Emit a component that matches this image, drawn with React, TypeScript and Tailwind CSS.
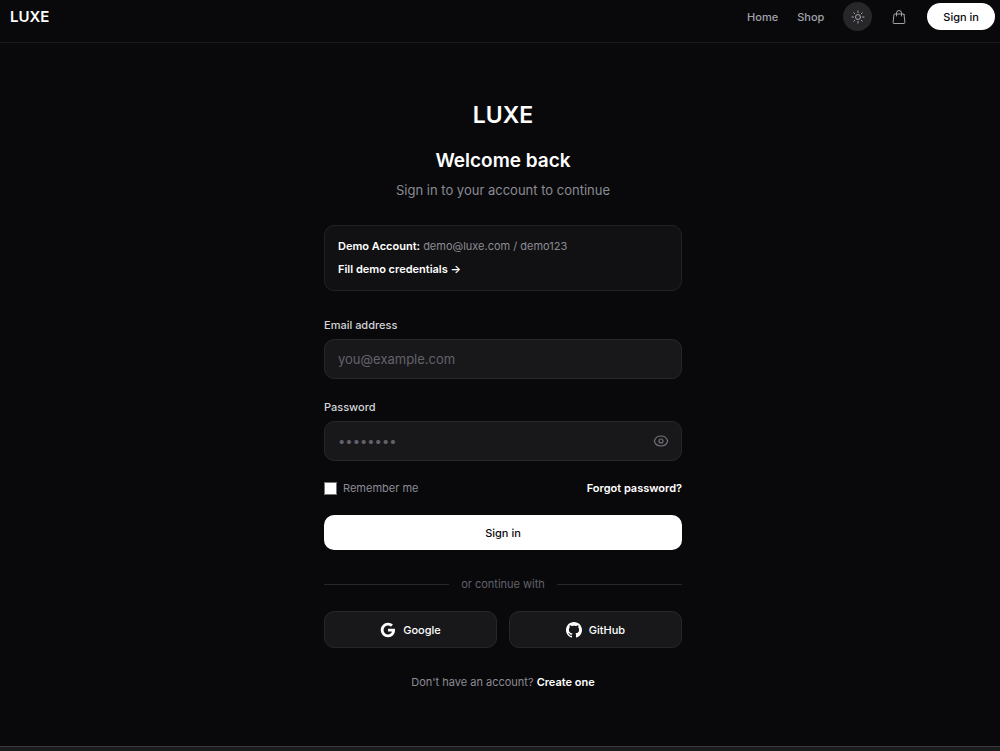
import { useState } from 'react';
import type { FormEvent, ReactNode } from 'react';

const DEMO = { email: 'demo@luxe.com', password: 'demo123' };

const inputClass =
    'h-10 w-full rounded-[10px] border border-[#27272a] bg-[#18181a] px-[13px] text-[13px] leading-5 text-white placeholder:text-[#62626b] focus:ring-1 focus:ring-zinc-500 focus:outline-none';

function SunIcon() {
    return (
        <svg viewBox="0 0 24 24" fill="none" stroke="currentColor" strokeWidth="1.5" strokeLinecap="round" strokeLinejoin="round" className="h-4 w-4">
            <path d="M12 3v2.25m6.364.386-1.591 1.591M21 12h-2.25m-.386 6.364-1.591-1.591M12 18.75V21m-4.773-4.227-1.591 1.591M5.25 12H3m4.227-4.773L5.636 5.636M15.75 12a3.75 3.75 0 1 1-7.5 0 3.75 3.75 0 0 1 7.5 0Z" />
        </svg>
    );
}

function BagIcon() {
    return (
        <svg viewBox="0 0 24 24" fill="none" stroke="currentColor" strokeWidth="1.5" strokeLinecap="round" strokeLinejoin="round" className="h-4 w-4">
            <path d="M15.75 10.5V6a3.75 3.75 0 1 0-7.5 0v4.5m11.356-1.993 1.263 12c.07.665-.45 1.243-1.119 1.243H4.25a1.125 1.125 0 0 1-1.12-1.243l1.264-12A1.125 1.125 0 0 1 5.513 7.5h12.974c.576 0 1.059.435 1.119 1.007Z" />
        </svg>
    );
}

function EyeIcon() {
    return (
        <svg viewBox="0 0 24 24" fill="none" stroke="currentColor" strokeWidth="1.75" strokeLinecap="round" strokeLinejoin="round" className="h-4 w-4">
            <path d="M2.036 12.322a1.012 1.012 0 0 1 0-.639C3.423 7.51 7.36 4.5 12 4.5c4.638 0 8.573 3.007 9.963 7.178.07.207.07.431 0 .639C20.577 16.49 16.64 19.5 12 19.5c-4.638 0-8.573-3.007-9.963-7.178Z" />
            <path d="M15 12a3 3 0 1 1-6 0 3 3 0 0 1 6 0Z" />
        </svg>
    );
}

function GoogleIcon() {
    return (
        <svg viewBox="1.5 1 22 22" fill="currentColor" className="h-4 w-4">
            <path d="M12.545 10.239v3.821h5.445c-.712 2.315-2.647 3.972-5.445 3.972a6.033 6.033 0 1 1 0-12.064c1.498 0 2.866.549 3.921 1.453l2.814-2.814A9.969 9.969 0 0 0 12.545 2C7.021 2 2.543 6.477 2.543 12s4.478 10 10.002 10c8.396 0 10.249-7.85 9.426-11.748l-9.426-.013Z" />
        </svg>
    );
}

function GitHubIcon() {
    return (
        <svg viewBox="0 0 24 24" fill="currentColor" className="h-4 w-4">
            <path d="M12 0c-6.626 0-12 5.373-12 12 0 5.302 3.438 9.8 8.207 11.387.599.111.793-.261.793-.577v-2.234c-3.338.726-4.033-1.416-4.033-1.416-.546-1.387-1.333-1.756-1.333-1.756-1.089-.745.083-.729.083-.729 1.205.084 1.839 1.237 1.839 1.237 1.07 1.834 2.807 1.304 3.492.997.107-.775.418-1.305.762-1.604-2.665-.305-5.467-1.334-5.467-5.931 0-1.311.469-2.381 1.236-3.221-.124-.303-.535-1.524.117-3.176 0 0 1.008-.322 3.301 1.23.957-.266 1.983-.399 3.003-.404 1.02.005 2.047.138 3.006.404 2.291-1.552 3.297-1.23 3.297-1.23.653 1.653.242 2.874.118 3.176.77.84 1.235 1.911 1.235 3.221 0 4.609-2.807 5.624-5.479 5.921.43.372.823 1.102.823 2.222v3.293c0 .319.192.694.801.576 4.765-1.589 8.199-6.086 8.199-11.386 0-6.627-5.373-12-12-12Z" />
        </svg>
    );
}

function SocialButton({ icon, children }: { icon: ReactNode; children: ReactNode }) {
    return (
        <button
            type="button"
            className="flex h-[37px] cursor-pointer items-center justify-center gap-[7px] rounded-[10px] border border-[#27272a] bg-[#18181a] font-medium text-white transition-colors hover:bg-[#222225]"
        >
            {icon}
            {children}
        </button>
    );
}

function Header() {
    return (
        <header className="border-b border-[#1c1c1f] pt-[2px] pr-[5px] pb-[11px] pl-[10px]">
            <div className="flex items-center justify-between">
                <a href="#" className="text-[15px] font-semibold text-white">
                    LUXE
                </a>
                <nav className="flex items-center font-medium text-[#a1a1aa]">
                    <a href="#" className="hover:text-white">Home</a>
                    <a href="#" className="ml-[19px] hover:text-white">Shop</a>
                    <button type="button" aria-label="Toggle theme" className="ml-[19px] flex h-[29px] w-[29px] cursor-pointer items-center justify-center rounded-full bg-[#27272a]">
                        <SunIcon />
                    </button>
                    <button type="button" aria-label="Cart" className="ml-[19px] flex h-4 w-4 cursor-pointer items-center justify-center">
                        <BagIcon />
                    </button>
                    <a href="#" className="ml-5 flex h-[27px] items-center rounded-full bg-white px-4 text-[#09090b]">
                        Sign in
                    </a>
                </nav>
            </div>
        </header>
    );
}

export default function App() {
    const [email, setEmail] = useState('');
    const [password, setPassword] = useState('');
    const [showPassword, setShowPassword] = useState(false);

    const fillDemo = () => {
        setEmail(DEMO.email);
        setPassword(DEMO.password);
    };

    const handleSubmit = (e: FormEvent) => e.preventDefault();

    return (
        <div className="flex min-h-screen flex-col bg-[#09090b] font-['Inter',sans-serif] text-[11px] leading-4 text-[#a1a1aa]">
            <Header />

            <main className="flex flex-1 items-start justify-center pt-14 pb-14 pl-[6px]">
                <div className="w-full max-w-[358px]">
                    <div className="text-center">
                        <a href="#" className="block text-[23px] leading-8 font-semibold text-white">LUXE</a>
                        <h1 className="mt-4 text-[19px] leading-7 font-semibold text-white">Welcome back</h1>
                        <p className="mt-[5px] text-[13px] leading-5 text-[#8b8b94]">Sign in to your account to continue</p>
                    </div>

                    <div className="mt-[25px] rounded-[10px] border border-[#222225] bg-[#111113] px-[13px] pt-3 pb-[13px]">
                        <p className="text-[#8b8b94]">
                            <strong className="font-semibold text-white">Demo Account:</strong> {DEMO.email} / {DEMO.password}
                        </p>
                        <button type="button" onClick={fillDemo} className="mt-[7px] block cursor-pointer font-semibold text-white">
                            Fill demo credentials →
                        </button>
                    </div>

                    <form onSubmit={handleSubmit} className="mt-[26px]">
                        <label htmlFor="email" className="block font-medium text-[#d4d4d8]">
                            Email address
                        </label>
                        <input
                            id="email"
                            type="email"
                            value={email}
                            onChange={(e) => setEmail(e.target.value)}
                            placeholder="you@example.com"
                            className={`mt-[6px] ${inputClass}`}
                        />

                        <label htmlFor="password" className="mt-5 block font-medium text-[#d4d4d8]">
                            Password
                        </label>
                        <div className="relative mt-[6px]">
                            <input
                                id="password"
                                type={showPassword ? 'text' : 'password'}
                                value={password}
                                onChange={(e) => setPassword(e.target.value)}
                                placeholder="••••••••"
                                className={inputClass}
                            />
                            <button
                                type="button"
                                aria-label="Show password"
                                onClick={() => setShowPassword((s) => !s)}
                                className="absolute inset-y-0 right-[13px] flex cursor-pointer items-center text-[#71717a]"
                            >
                                <EyeIcon />
                            </button>
                        </div>

                        <div className="mt-[19px] flex items-center justify-between">
                            <label className="flex items-center gap-[6px] text-[#8b8b94]">
                                <input type="checkbox" className="h-[13px] w-[13px] appearance-none border border-[#767676] bg-white checked:bg-zinc-500" />
                                Remember me
                            </label>
                            <a href="#" className="font-semibold text-white">Forgot password?</a>
                        </div>

                        <button
                            type="submit"
                            className="mt-[19px] h-[35px] w-full cursor-pointer rounded-[10px] bg-white font-medium text-[#09090b] transition-colors hover:bg-zinc-200"
                        >
                            Sign in
                        </button>
                    </form>

                    <div className="mt-[26px] flex items-center gap-3 text-[#62626b]">
                        <span className="h-px flex-1 bg-[#27272a]" />
                        or continue with
                        <span className="h-px flex-1 bg-[#27272a]" />
                    </div>

                    <div className="mt-[19px] grid grid-cols-2 gap-3">
                        <SocialButton icon={<GoogleIcon />}>Google</SocialButton>
                        <SocialButton icon={<GitHubIcon />}>GitHub</SocialButton>
                    </div>

                    <p className="mt-[26px] text-center text-[#8b8b94]">
                        Don't have an account? <a href="#" className="font-semibold text-white">Create one</a>
                    </p>
                </div>
            </main>

            <footer className="h-[5px] border-t border-[#3a3a3d] bg-[#1c1c1f]" />
        </div>
    );
}
